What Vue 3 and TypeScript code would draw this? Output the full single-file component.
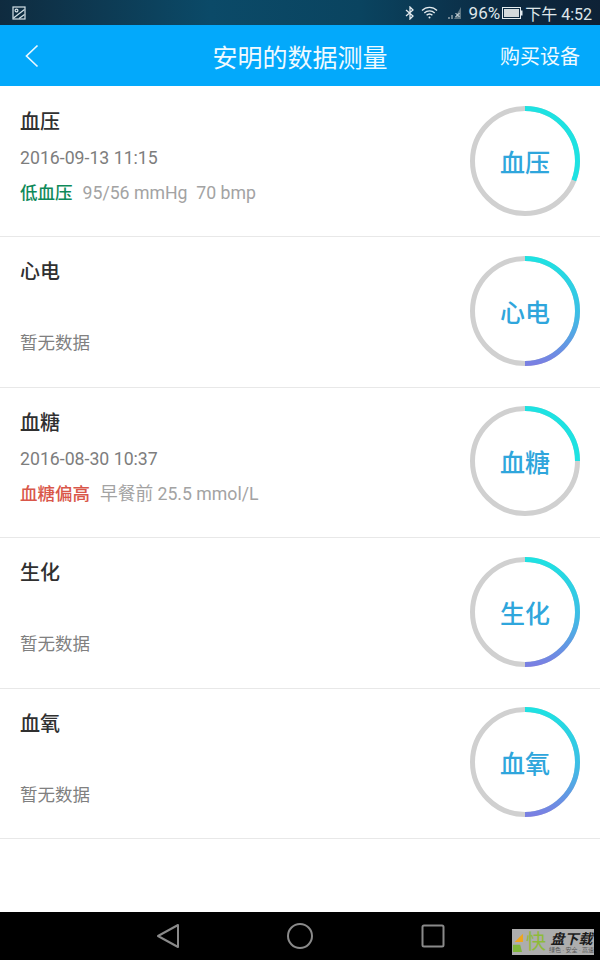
<script setup lang="ts">
interface Item {
  name: string
  date?: string
  level?: string
  levelType?: 'low' | 'high'
  detail?: string
  percent: number
}

const items: Item[] = [
  { name: '血压', date: '2016-09-13 11:15', level: '低血压', levelType: 'low', detail: '95/56 mmHg  70 bmp', percent: 31 },
  { name: '心电', percent: 50 },
  { name: '血糖', date: '2016-08-30 10:37', level: '血糖偏高', levelType: 'high', detail: '早餐前 25.5 mmol/L', percent: 25 },
  { name: '生化', percent: 50 },
  { name: '血氧', percent: 50 }
]

const ringStroke = (item: Item, i: number) => (item.percent < 35 ? '#1ee2e2' : `url(#ring-${i})`)
</script>

<template>
  <div class="page">
    <div class="status-bar">
      <svg class="pic-icon" width="14" height="14" viewBox="0 0 14 14" fill="none" stroke="#d5e2e8" stroke-width="1.2">
        <rect x="1" y="1" width="12" height="12" />
        <circle cx="4.5" cy="4.5" r="1.4" />
        <path d="M1.5 12 12.5 3.5M7 12.5l5.5-4" />
      </svg>
      <div class="status-right">
        <svg width="10" height="14" viewBox="0 0 10 14" fill="none" stroke="#e4ebef" stroke-width="1.3">
          <path d="M1 4l7 6-3 3V1l3 3-7 6" />
        </svg>
        <svg class="wifi" width="17" height="13" viewBox="0 0 17 13" fill="none" stroke="#e4ebef" stroke-width="1.3">
          <path d="M1 4.5a10.5 10.5 0 0 1 15 0M3.3 7a7.2 7.2 0 0 1 10.4 0M5.6 9.3a3.9 3.9 0 0 1 5.8 0" />
          <circle cx="8.5" cy="11.5" r="1" fill="#e4ebef" stroke="none" />
        </svg>
        <svg class="signal" width="15" height="12" viewBox="0 0 15 12">
          <path d="M1 10h2v2H1zM4 8h2v4H4z" fill="#6f8592" />
          <path d="M14 0v12H7z" fill="#5d7582" />
          <path d="M8.5 6l4 4M12.5 6l-4 4" stroke="#dfe7ea" stroke-width="1" />
        </svg>
        <span class="pct">96%</span>
        <svg class="battery" width="21" height="12" viewBox="0 0 21 12">
          <rect x="0.5" y="0.5" width="18" height="11" fill="none" stroke="#e4ebef" />
          <rect x="2" y="2" width="15" height="8" fill="#d3d9dc" />
          <rect x="19" y="3.5" width="1.5" height="5" fill="#e4ebef" />
        </svg>
        <span class="clock">下午 4:52</span>
      </div>
    </div>

    <header class="nav-bar">
      <svg class="back" width="14" height="24" viewBox="0 0 14 24" fill="none" stroke="#e8f7ff" stroke-width="1.7">
        <path d="M12.5 1.5 1.5 12l11 10.5" />
      </svg>
      <h1 class="nav-title">安明的数据测量</h1>
      <span class="nav-action">购买设备</span>
    </header>

    <main class="list">
      <section v-for="(item, i) in items" :key="item.name" class="row">
        <div class="info">
          <div class="name">{{ item.name }}</div>
          <template v-if="item.date">
            <div class="date">{{ item.date }}</div>
            <div class="result">
              <span :class="['level', item.levelType]">{{ item.level }}</span>
              <span class="detail">{{ item.detail }}</span>
            </div>
          </template>
          <div v-else class="empty">暂无数据</div>
        </div>
        <div class="ring">
          <svg width="110" height="110" viewBox="0 0 110 110" fill="none">
            <defs>
              <linearGradient :id="`ring-${i}`" gradientUnits="userSpaceOnUse" x1="108" y1="55" x2="2" y2="55">
                <stop offset="0" stop-color="#1ee2e2" />
                <stop offset="0.55" stop-color="#3fbce6" />
                <stop offset="1" stop-color="#7a7fe2" />
              </linearGradient>
            </defs>
            <circle cx="55" cy="55" r="52.5" stroke="#d0d0d0" stroke-width="5" />
            <circle
              cx="55"
              cy="55"
              r="52.5"
              :stroke="ringStroke(item, i)"
              stroke-width="5"
              pathLength="100"
              :stroke-dasharray="`${item.percent} 100`"
              transform="rotate(-90 55 55)"
            />
          </svg>
          <span class="ring-label">{{ item.name }}</span>
        </div>
      </section>
    </main>

    <footer class="sys-bar">
      <svg class="sys-back" width="24" height="26" viewBox="0 0 24 26" fill="none" stroke="#8a8a8a" stroke-width="2" stroke-linejoin="round">
        <path d="M22 2v22L2 13z" />
      </svg>
      <svg class="sys-home" width="26" height="26" viewBox="0 0 26 26" fill="none" stroke="#8a8a8a" stroke-width="2">
        <circle cx="13" cy="13" r="12" />
      </svg>
      <svg class="sys-recent" width="24" height="24" viewBox="0 0 24 24" fill="none" stroke="#8a8a8a" stroke-width="2">
        <rect x="1.5" y="1.5" width="21" height="21" rx="1.5" />
      </svg>
      <div class="watermark">
        <svg width="12" height="26" viewBox="0 0 12 26">
          <path d="M12 4v9H3z" fill="#efa51c" />
          <path d="M1 16h8l2 8H1z" fill="#7fb53a" />
        </svg>
        <span class="wm-kuai">快</span>
        <div class="wm-text">
          <span class="wm-main">盘下载</span>
          <span class="wm-sub">绿色 · 安全 · 高速</span>
        </div>
      </div>
    </footer>
  </div>
</template>

<style scoped>
.page {
  width: 600px;
  height: 960px;
  display: flex;
  flex-direction: column;
  background: #fff;
  font-family: Roboto, "Noto Sans CJK SC", sans-serif;
  overflow: hidden;
}

.status-bar {
  height: 25px;
  flex-shrink: 0;
  display: flex;
  align-items: center;
  justify-content: space-between;
  padding: 0 8px 0 12px;
  box-sizing: border-box;
  background: linear-gradient(90deg, #0f2b3f 0%, #0b4a68 35%, #0a4460 60%, #0c2840 85%, #0e2236 100%);
}

.status-right {
  display: flex;
  align-items: center;
  color: #dfe6ea;
  font-size: 16px;
}

.wifi {
  margin-left: 6px;
}

.signal {
  margin-left: 9px;
}

.pct {
  margin-left: 7px;
  font-size: 17px;
}

.battery {
  margin-left: 2px;
}

.clock {
  margin-left: 2px;
}

.nav-bar {
  height: 61px;
  flex-shrink: 0;
  position: relative;
  display: flex;
  align-items: center;
  justify-content: space-between;
  padding: 0 20px 0 25px;
  box-sizing: border-box;
  background: #03a9fb;
  color: #f0faff;
}

.nav-title {
  position: absolute;
  left: 0;
  right: 0;
  margin: 0;
  text-align: center;
  font-size: 25px;
  font-weight: 400;
}

.nav-action {
  font-size: 20px;
}

.list {
  flex: 1;
  padding-top: 1px;
}

.row {
  height: 150.4px;
  box-sizing: border-box;
  display: flex;
  align-items: center;
  justify-content: space-between;
  padding: 0 20px;
  border-bottom: 1px solid #e8e8e8;
}

.info {
  align-self: stretch;
  display: flex;
  flex-direction: column;
  padding-top: 20px;
}

.name {
  font-size: 20px;
  line-height: 30px;
  font-weight: 500;
  color: #303030;
}

.date {
  margin-top: 6px;
  font-size: 17.7px;
  line-height: 30px;
  color: #7d7d7d;
}

.result {
  margin-top: 5px;
  line-height: 30px;
  font-size: 17.7px;
  white-space: pre;
}

.level {
  font-size: 17.5px;
  font-weight: 500;
}

.level.low {
  color: #0f8a5a;
}

.level.high {
  color: #d9574a;
}

.detail {
  margin-left: 10px;
  color: #a3a3a3;
}

.empty {
  margin-top: 41px;
  font-size: 17.5px;
  line-height: 30px;
  color: #808080;
}

.ring {
  position: relative;
  width: 110px;
  height: 110px;
  display: flex;
  align-items: center;
  justify-content: center;
  margin-top: -2px;
}

.ring svg {
  position: absolute;
  inset: 0;
}

.ring-label {
  font-size: 25px;
  font-weight: 500;
  color: #2fa6dc;
}

.sys-bar {
  height: 48px;
  flex-shrink: 0;
  position: relative;
  display: flex;
  align-items: center;
  background: #000;
}

.sys-back {
  margin-left: 156px;
}

.sys-home {
  margin-left: 107px;
}

.sys-recent {
  margin-left: 108px;
}

.watermark {
  position: absolute;
  left: 512px;
  top: 17px;
  width: 82px;
  height: 26px;
  display: flex;
  align-items: center;
  background: #adadad;
  overflow: hidden;
}

.wm-kuai {
  margin-left: 3px;
  font-size: 20px;
  line-height: 26px;
  color: #8dbb3a;
}

.wm-text {
  margin-left: 3px;
  display: flex;
  flex-direction: column;
  align-items: center;
  line-height: 1;
}

.wm-main {
  font-size: 14px;
  font-weight: 700;
  font-style: italic;
  color: #1c1c1c;
}

.wm-sub {
  margin-top: 1px;
  font-size: 6px;
  color: #555;
  white-space: nowrap;
}
</style>

<style>
body {
  margin: 0;
  background: #fff;
}
</style>
